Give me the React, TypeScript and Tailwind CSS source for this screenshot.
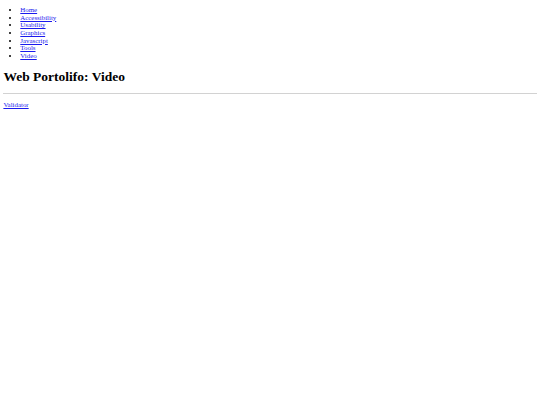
export default function App() {
  const items = ["Home", "Accessibility", "Usability", "Graphics", "Javascript", "Tools", "Video"];
  return (
    <div className="bg-white min-h-[405px] flow-root px-[3.4px] text-black" style={{ fontFamily: '"Liberation Serif", "Times New Roman", serif' }}>
      <ul className="list-disc pl-[16.9px] mt-[6.3px] mb-0 text-[6.9px] leading-[7.6px]">
        {items.map((t) => (
          <li key={t}>
            <a href="#" className="text-[#1a1aee] underline">{t}</a>
          </li>
        ))}
      </ul>
      <h1 className="text-[13.5px] leading-[15.5px] font-bold mt-[9.5px] mb-0">Web Portolifo: Video</h1>
      <hr className="mt-[8.8px] mb-0 h-0 border-0 border-t border-solid border-t-[#d2d2d2]" />
      <p className="mt-[6.4px] text-[6.9px] leading-[7.6px]">
        <a href="#" className="text-[#1a1aee] underline">Validator</a>
      </p>
    </div>
  );
}
